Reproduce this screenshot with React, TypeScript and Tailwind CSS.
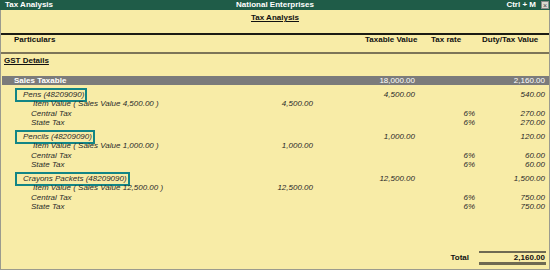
import React from "react";

type RowProps = {
  label?: React.ReactNode;
  indent?: number;
  item?: string;
  taxable?: string;
  rate?: string;
  duty?: string;
  boxed?: boolean;
};

const Row = ({ label, item, taxable, rate, duty, boxed, indent }: RowProps) => (
  <div className="flex h-[9.5px] items-center italic text-[8px] leading-[10px] text-[#2a2a2a]">
    <div className="flex-1 flex items-center min-w-0">
      {boxed ? (
        <span className="ml-[14px] border-2 border-[#138585] pl-[6px] pr-[1px] leading-[10px] whitespace-nowrap">
          {label}
        </span>
      ) : (
        <span className={`whitespace-nowrap ${indent === 33 ? "pl-[32px]" : "pl-[30px]"}`}>{label}</span>
      )}
    </div>
    <div className="w-[80px] text-right">{item}</div>
    <div className="w-[102px] text-right">{taxable}</div>
    <div className="w-[60px] text-right">{rate}</div>
    <div className="w-[70px] text-right">{duty}</div>
    <div className="w-[4px]" />
  </div>
);

const Group = ({ name, value, tax, half }: { name: string; value: string; tax: string; half: string }) => (
  <div className="flex flex-col">
    <Row boxed label={name} taxable={value} duty={tax} />
    <Row indent={33} label={`Item Value ( Sales Value ${value} )`} item={value} />
    <Row indent={31} label="Central Tax" rate="6%" duty={half} />
    <Row indent={31} label="State Tax" rate="6%" duty={half} />
  </div>
);

export default function App() {
  return (
    <div className="w-[550px] h-[270px] flex flex-col bg-[#f8eca7] font-['Liberation_Sans',Arial,sans-serif] overflow-hidden">
      {/* title bar */}
      <div className="h-[10px] bg-[#1f5c48] grid grid-cols-3 items-center text-white font-bold text-[8px] leading-[10px] shrink-0">
        <div className="pl-[5px]">Tax Analysis</div>
        <div className="text-center">National Enterprises</div>
        <div className="flex justify-end items-center gap-[5px] pr-[1px]">
          <span>Ctrl + M</span>
          <span className="w-[8px] h-[8px] bg-[#d9d9d0] border border-[#8a8a8a] flex items-center justify-center text-[#444] text-[7px] leading-none font-normal">
            ×
          </span>
        </div>
      </div>

      <div className="flex-1 flex flex-col border-l border-r border-b border-[#9b9b8e] min-h-0">
        {/* heading */}
        <div className="h-[23px] pt-[3px] text-center text-[8px] leading-[10px] shrink-0">
          <span className="font-bold underline text-[#111]">Tax Analysis</span>
        </div>
        <div className="h-[2px] bg-[#1b1b14] shrink-0" />
        <div className="h-[9px] flex items-center font-bold text-[8px] leading-[10px] text-[#111] shrink-0">
          <div className="flex-1 pl-[13px]">Particulars</div>
          <div className="w-[66px]">Taxable Value</div>
          <div className="w-[51px]">Tax rate</div>
          <div className="w-[67px]">Duty/Tax Value</div>
        </div>
        <div className="h-[8px] shrink-0" />
        <div className="h-[2px] bg-[#7d7558] shrink-0" />
        <div className="h-[12px] flex items-end pl-[3px] text-[8px] leading-[10px] shrink-0">
          <span className="font-bold underline text-[#111]">GST Details</span>
        </div>
        <div className="h-[10px] shrink-0" />
        {/* Sales Taxable bar */}
        <div className="h-[9px] bg-[#7b7b7b] flex items-center text-white text-[8px] leading-[9px] ml-[1px] shrink-0">
          <div className="flex-1 pl-[12px] font-bold">Sales Taxable</div>
          <div className="w-[102px] text-right">18,000.00</div>
          <div className="w-[60px]" />
          <div className="w-[70px] text-right">2,160.00</div>
          <div className="w-[4px]" />
        </div>
        <div className="h-[5px] shrink-0" />
        <div className="flex flex-col gap-[4px] shrink-0">
          <Group name="Pens (48209090)" value="4,500.00" tax="540.00" half="270.00" />
          <Group name="Pencils (48209090)" value="1,000.00" tax="120.00" half="60.00" />
          <Group name="Crayons Packets (48209090)" value="12,500.00" tax="1,500.00" half="750.00" />
        </div>
        <div className="flex-1" />
        {/* total */}
        <div className="flex items-center justify-end pr-[3px] pb-[4px] shrink-0">
          <span className="font-bold text-[8px] leading-[10px] text-[#111] mr-[10px]">Total</span>
          <div className="w-[67px] border-t-2 border-b-[3px] border-b-double border-[#6f6a52] text-right font-bold text-[8px] leading-[9px] text-[#111] pr-[1px]">
            2,160.00
          </div>
        </div>
      </div>
    </div>
  );
}
